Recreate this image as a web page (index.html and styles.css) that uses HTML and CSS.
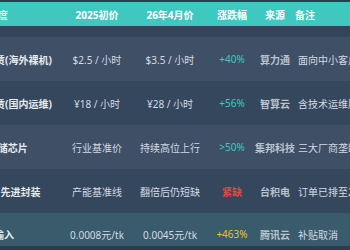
FILE: index.html
```html
<!DOCTYPE html>
<html lang="zh">
<head>
<meta charset="utf-8">
<link rel="stylesheet" href="styles.css">
</head>
<body>
<div class="sheet">
  <div class="top"></div>
  <div class="row head">
    <div class="name">成本维度</div>
    <div class="c">2025初价</div>
    <div class="c">26年4月价</div>
    <div class="c">涨跌幅</div>
    <div class="c">来源</div>
    <div class="note">备注</div>
  </div>
  <div class="gap"></div>
  <div class="row light">
    <div class="name">GPU租赁(海外裸机)</div>
    <div class="c">$2.5 / 小时</div>
    <div class="c">$3.5 / 小时</div>
    <div class="c up">+40%</div>
    <div class="c src">算力通</div>
    <div class="note">面向中小客户</div>
  </div>
  <div class="row dark">
    <div class="name">GPU租赁(国内运维)</div>
    <div class="c">¥18 / 小时</div>
    <div class="c">¥28 / 小时</div>
    <div class="c up">+56%</div>
    <div class="c src">智算云</div>
    <div class="note">含技术运维服务</div>
  </div>
  <div class="row light">
    <div class="name">HBM存储芯片</div>
    <div class="c">行业基准价</div>
    <div class="c">持续高位上行</div>
    <div class="c up">&gt;50%</div>
    <div class="c src">集邦科技</div>
    <div class="note">三大厂商垄断</div>
  </div>
  <div class="row dark">
    <div class="name">CoWoS 先进封装</div>
    <div class="c">产能基准线</div>
    <div class="c">翻倍后仍短缺</div>
    <div class="c hot">紧缺</div>
    <div class="c src">台积电</div>
    <div class="note">订单已排至2027</div>
  </div>
  <div class="row hl">
    <div class="name">Token输入</div>
    <div class="c">0.0008元/tk</div>
    <div class="c">0.0045元/tk</div>
    <div class="c warn">+463%</div>
    <div class="c src">腾讯云</div>
    <div class="note">补贴取消</div>
  </div>
</div>
</body>
</html>
```

FILE: styles.css
```css
html, body {
  margin: 0;
  padding: 0;
  background: #2d3d4f;
  overflow: hidden;
  width: 350px;
  height: 250px;
}
.sheet {
  margin-left: -40px;
  width: 460px;
  font-family: "Noto Sans", "Noto Sans CJK SC", sans-serif;
  font-size: 10px;
  color: #d3dae2;
}
.top { height: 2px; background: #2d3d4f; }
.gap { height: 11px; background: #33455a; }
.row {
  display: grid;
  grid-template-columns: 102px 70px 76px 48px 38px 1fr;
  align-items: center;
  white-space: nowrap;
}
.head {
  height: 24px;
  background: #3fc7c0;
  color: #ffffff;
  font-weight: 700;
}
.light { height: 44px; background: #3e4f66; }
.dark { height: 44px; background: #35475c; }
.hl {
  height: 33px;
  background: #395b6b;
  padding-top: 9px;
  box-sizing: border-box;
}
.name { padding-left: 4px; font-weight: 700; color: #e6ebf0; }
.head .name { padding-left: 8px; }
.c { display: flex; justify-content: center; }
.note { padding-left: 4px; }
.head .note { padding-left: 1px; }
.src { font-weight: 700; color: #b9c3cd; }
.head .src { color: #ffffff; }
.up { color: #3fc7c0; }
.hot { color: #e5483b; font-weight: 700; }
.warn { color: #f0c419; }
```
